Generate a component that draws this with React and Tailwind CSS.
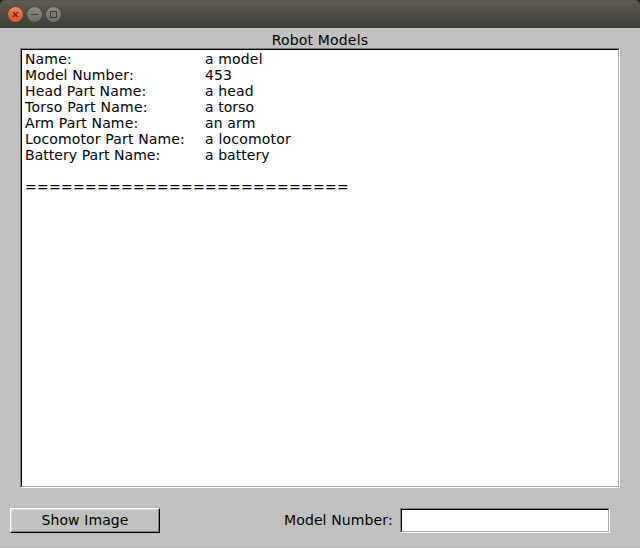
const rows = [
  ['Name:', 'a model', 'tracking-[0.15px]', 'tracking-[0.15px]'],
  ['Model Number:', '453', 'tracking-[0.12px]', 'tracking-[0.06px]'],
  ['Head Part Name:', 'a head', 'tracking-[0.14px]', 'tracking-[0.15px]'],
  ['Torso Part Name:', 'a torso', 'tracking-[0.24px]', 'tracking-[0.05px]'],
  ['Arm Part Name:', 'an arm', 'tracking-[0.14px]', 'tracking-[0.15px]'],
  ['Locomotor Part Name:', 'a locomotor', 'tracking-[0.15px]', 'tracking-[0.2px]'],
  ['Battery Part Name:', 'a battery', 'tracking-[0.05px]', 'tracking-[0.05px]'],
];

function WindowControls() {
  return (
    <svg width="62" height="28" viewBox="0 0 62 28" className="block">
      <defs>
        <linearGradient id="close" x1="0" y1="0" x2="0" y2="1">
          <stop offset="0" stopColor="#f58a62" />
          <stop offset="0.5" stopColor="#ec6339" />
          <stop offset="1" stopColor="#e2572c" />
        </linearGradient>
        <linearGradient id="grey" x1="0" y1="0" x2="0" y2="1">
          <stop offset="0" stopColor="#8c8980" />
          <stop offset="1" stopColor="#6f6d66" />
        </linearGradient>
      </defs>
      <circle cx="15.5" cy="14.5" r="8" fill="#45433d" />
      <circle cx="34.5" cy="14.5" r="8" fill="#45433d" />
      <circle cx="53.5" cy="14.5" r="8" fill="#45433d" />
      <circle cx="15.5" cy="14.5" r="7.5" fill="url(#close)" />
      <circle cx="34.5" cy="14.5" r="7.5" fill="url(#grey)" />
      <circle cx="53.5" cy="14.5" r="7.5" fill="url(#grey)" />
      <path d="M13 12l5 5M18 12l-5 5" stroke="#5a2c1c" strokeWidth="1.2" />
      <path d="M31 14.5h7" stroke="#3c3b37" />
      <rect x="50.5" y="11.5" width="6" height="6" fill="none" stroke="#3c3b37" />
    </svg>
  );
}

export default function App() {
  return (
    <div className="flex h-[548px] w-[640px] flex-col overflow-hidden bg-[#c0c0c0] font-['DejaVu_Sans',sans-serif] text-[14px] leading-4 text-black">
      <header className="h-7 shrink-0 bg-[#24202a]">
        <div className="h-7 rounded-t-[5px] border-t border-[#57554d] bg-linear-to-b from-[#5e5b52] to-[#3d3c37]">
          <div className="-mt-px">
            <WindowControls />
          </div>
        </div>
      </header>
      <main className="flex grow flex-col border-b border-[#b8b8b8]">
        <h1 className="h-5 pt-1 text-center tracking-[0.16px]">Robot Models</h1>
        <div className="mx-5 h-[440px] border border-t-[#808080] border-r-white border-b-white border-l-[#808080]">
          <div className="h-full border border-t-black border-r-[#a8a8a8] border-b-[#a8a8a8] border-l-black bg-white pt-px pl-[3px]">
            {rows.map(([label, value, labelTracking, valueTracking]) => (
              <div key={label} className="flex h-4">
                <span className={`w-[180px] ${labelTracking}`}>{label}</span>
                <span className={valueTracking}>{value}</span>
              </div>
            ))}
            <div className="mt-4 tracking-[0.27px]">===========================</div>
          </div>
        </div>
        <div className="mt-5 flex h-[25px] items-start pr-[30px] pl-[10px]">
          <button className="h-[25px] w-[150px] border border-t-white border-r-black border-b-black border-l-white">
            <span className="flex h-full items-start justify-center border border-t-[#dcdcdc] border-r-[#808080] border-b-[#808080] border-l-[#dcdcdc] pt-[2px] tracking-[0.1px]">
              Show Image
            </span>
          </button>
          <label htmlFor="model-number" className="ml-[124px] pt-1 tracking-[0.12px]">Model Number:</label>
          <div className="ml-auto h-[25px] w-[210px] border border-t-[#808080] border-r-white border-b-white border-l-[#808080]">
            <input
              id="model-number"
              className="block h-full w-full border border-t-black border-r-[#a8a8a8] border-b-[#a8a8a8] border-l-black bg-white px-1 outline-none"
            />
          </div>
        </div>
      </main>
    </div>
  );
}
